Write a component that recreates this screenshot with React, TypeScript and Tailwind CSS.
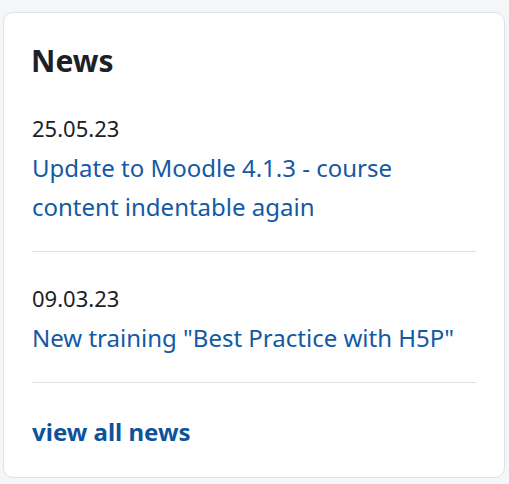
import React from "react";

export default function App() {
  const font = { fontFamily: '"Noto Sans", "Open Sans", sans-serif' };
  return (
    <div className="w-[509px] h-[484px] bg-[#f5f6f8] pt-[12px] pl-[3px]" style={font}>
      <div className="w-[502px] h-[466px] bg-white border border-[#dee2e6] rounded-[10px] px-[28px] pt-[30px]">
        <h2 className="text-[30px] leading-[36px] font-bold text-[#1d2125] -ml-px">News</h2>
        <div className="mt-[30px] pb-[25px] border-b border-[#dee2e6]">
          <div className="text-[22px] leading-[39px] text-[#1d2125]">25.05.23</div>
          <a className="block text-[24px] leading-[39px] text-[#1459a4]">
            Update to Moodle 4.1.3 - course content indentable again
          </a>
        </div>
        <div className="pt-[27px] pb-[25px] border-b border-[#dee2e6]">
          <div className="text-[22px] leading-[39px] text-[#1d2125]">09.03.23</div>
          <a className="block text-[24px] leading-[39px] text-[#1459a4]">
            New training "Best Practice with H5P"
          </a>
        </div>
        <div className="pt-[29px]">
          <a className="block text-[24px] leading-[39px] font-bold text-[#0e529c]">view all news</a>
        </div>
      </div>
    </div>
  );
}
